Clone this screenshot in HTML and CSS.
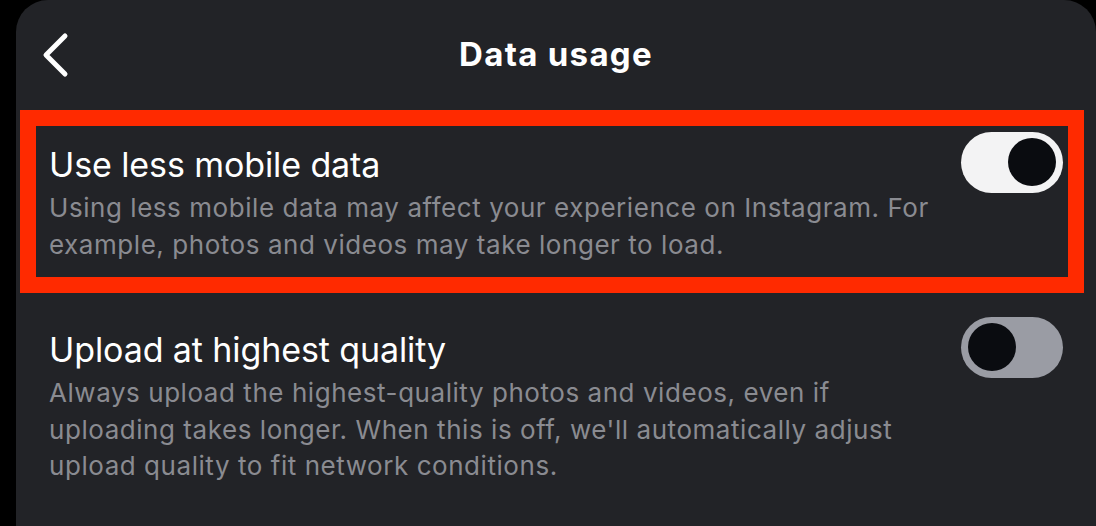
FILE: index.html
```html
<!DOCTYPE html>
<html>
<head>
<meta charset="utf-8">
<link rel="stylesheet" href="styles.css">
</head>
<body>
<div class="panel">
  <header class="header">
    <svg class="back" width="30" height="46" viewBox="0 0 30 46">
      <polyline points="24,4 5,23 24,42" fill="none" stroke="#ffffff" stroke-width="5" stroke-linecap="round" stroke-linejoin="round"/>
    </svg>
    <h1 class="title">Data usage</h1>
  </header>
  <div class="row row-highlight">
    <div class="text">
      <div class="label">Use less mobile data</div>
      <div class="desc">Using less mobile data may affect your experience on Instagram. For example, photos and videos may take longer to load.</div>
    </div>
    <div class="toggle on"><span class="knob"></span></div>
  </div>
  <div class="row row-plain">
    <div class="text">
      <div class="label">Upload at highest quality</div>
      <div class="desc">Always upload the highest-quality photos and videos, even if uploading takes longer. When this is off, we'll automatically adjust upload quality to fit network conditions.</div>
    </div>
    <div class="toggle off"><span class="knob"></span></div>
  </div>
</div>
</body>
</html>
```
FILE: styles.css
```css
html, body {
  margin: 0;
  padding: 0;
  background: #000000;
  width: 1096px;
  height: 526px;
  overflow: hidden;
  font-family: Inter, "Noto Sans", sans-serif;
}
.panel {
  margin-left: 16px;
  width: 1080px;
  height: 526px;
  background: #222327;
  border-radius: 32px 32px 0 0;
}
.header {
  position: relative;
  height: 110px;
  display: flex;
  align-items: flex-start;
  justify-content: center;
}
.back {
  position: absolute;
  left: 25px;
  top: 32px;
}
.title {
  margin: 0;
  padding-top: 34px;
  font-size: 33px;
  line-height: 40px;
  font-weight: 700;
  color: #ffffff;
  letter-spacing: 1.3px;
}
.row {
  display: flex;
  justify-content: space-between;
  align-items: flex-start;
  margin: 0 12px 0 4px;
  border: 16px solid transparent;
  padding: 6px 5px 0 13px;
}
.row-highlight {
  border-color: #ff2a00;
  height: 145px;
  box-sizing: content-box;
  padding-bottom: 0;
}
.row-plain {
  padding-top: 8px;
}
.text {
  padding-top: 12px;
  width: 900px;
}
.label {
  font-size: 34px;
  line-height: 42px;
  color: #ffffff;
  letter-spacing: -0.1px;
}
.desc {
  margin-top: 4px;
  font-size: 26px;
  line-height: 36.5px;
  color: #8a8b91;
  letter-spacing: 0.55px;
}
.toggle {
  flex: none;
  width: 102px;
  height: 61px;
  border-radius: 31px;
  position: relative;
}
.toggle.on {
  background: #f3f3f4;
}
.toggle.off {
  background: #9a9ca4;
}
.knob {
  position: absolute;
  top: 6px;
  width: 48px;
  height: 48px;
  border-radius: 50%;
  background: #0a0c10;
}
.toggle.on .knob {
  right: 7px;
}
.toggle.off .knob {
  left: 7px;
}
```
